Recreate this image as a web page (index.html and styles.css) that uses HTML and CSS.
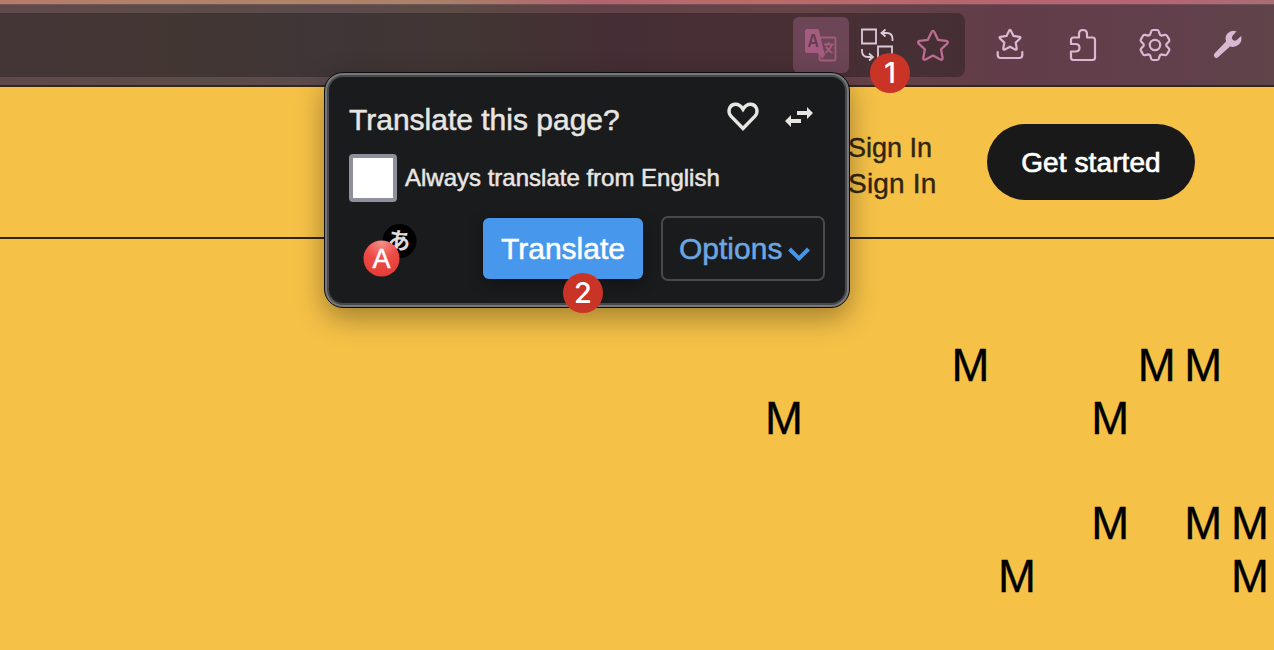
FILE: index.html
```html
<!DOCTYPE html>
<html lang="en">
<head>
<meta charset="utf-8">
<title>Translate this page</title>
<link rel="stylesheet" href="styles.css">
</head>
<body>
<div class="strip"></div>
<div class="toolbar">
  <div class="address">
    <div class="translate-btn">
      <svg width="56" height="56" viewBox="0 0 56 56"><rect x="26.500" y="20.500" width="16" height="23" rx="1.500" fill="none" stroke="#a65c81" stroke-width="1.800"/><path d="M14 12h10.500q1 0 1.300 1l6 25h-4.500l-3-2H14q-2 0-2-2V14q0-2 2-2z" fill="#a65c81"/><path d="M27 36.500h5.500l-3.500 6z" fill="#a65c81"/><path d="M16 30l3.500-12h1.500l3.500 12M17.500 26h6" fill="none" stroke="#673f52" stroke-width="2.200"/><path d="M31 27.500h9.500M35.500 25v2.500M38.500 28q-1.500 5-6.500 8M33 29.500q2.500 4.500 6.500 6.500" fill="none" stroke="#a65c81" stroke-width="1.800"/></svg>
    </div>
    <svg class="swap-icon" width="56" height="56" viewBox="0 0 56 56" fill="none" stroke="#ddcbd7" stroke-width="1.800"><path d="M13 12.500h14v14H13zM29 29.500h14v14H29z"/><path d="M43.500 24v-2q0-6-6-6h-5M36.500 12.500l-4 3.500 4 3.500M13 32v2q0 6 6 6h5M20 36.500l4 3.500-4 3.500"/></svg>
    <svg class="star-icon" width="56" height="56" viewBox="0 0 56 56"><path d="M26.500 15.200q1.500-2.600 3 0l3.500 7.600 8.300 1.100q2.600.6.900 2.800l-6.200 5.700 1.600 8.300q.2 2.800-2.300 1.800L28 38.500l-7.400 4q-2.500 1-2.300-1.800l1.600-8.300-6.200-5.700q-1.700-2.200.9-2.800l8.300-1.100z" fill="none" stroke="#bd6d91" stroke-width="2.300" stroke-linejoin="round"/></svg>
  </div>
  <div class="actions">
    <svg width="32" height="34" viewBox="-16 -17 32 34" fill="none" stroke="#d9b9d2" stroke-width="2.200" stroke-linejoin="round" stroke-linecap="round"><path d="M-.8-14.400q.8-1.400 1.600 0l2.700 5.300 6 .9q1.600.4.500 1.700l-4.300 4.100 1 5.800q0 1.700-1.500 1L0 1.700l-5.200 2.700q-1.500.7-1.500-1l1-5.800-4.300-4.100q-1.100-1.300.5-1.700l6-.9zM-12.300 7v3q0 3 3 3H9.300q3 0 3-3V7"/></svg>
    <svg width="32" height="34" viewBox="-16 -17 32 34" fill="none" stroke="#d9b9d2" stroke-width="2.200" stroke-linejoin="round"><path d="M-12-4v-1q0-2.500 2.500-2.500H-4V-11q0-4 4-4t4 4v3.500h5.500Q12-7.500 12-5v17.500q0 2.500-2.500 2.500h-19q-2.500 0-2.500-2.500V6.500h4.500q4 0 4-3.700t-4-3.800H-12z"/></svg>
    <svg width="32" height="34" viewBox="-16 -17 32 34" fill="none" stroke="#d9b9d2" stroke-width="2.200" stroke-linejoin="round"><path d="M-5-10.200L-3.800-13.700Q-3.400-15-2-15H2Q3.400-15 3.800-13.700L5-10.200 6.330-9.430 10-10.200Q11.400-10.400 12-9.300L14.100-5.600Q14.800-4.400 13.900-3.500L11.330-.77V.77L13.900 3.500Q14.800 4.400 14.100 5.600L12 9.300Q11.400 10.400 10 10.200L6.330 9.430 5 10.200 3.800 13.700Q3.400 15 2 15H-2Q-3.400 15-3.800 13.700L-5 10.200-6.330 9.430-10 10.200Q-11.400 10.400-12 9.300L-14.100 5.600Q-14.800 4.400-13.900 3.500L-11.330.77V-.77L-13.900-3.500Q-14.800-4.400-14.100-5.600L-12-9.300Q-11.400-10.400-10-10.200L-6.330-9.430z"/><circle r="5.200"/></svg>
    <svg width="32" height="34" viewBox="-16 -17 32 34"><path d="M8.500-13.800Q3-15.500-.5-11.500-3.500-8-2-3.500L-13.500 8.500Q-15 10.200-13.500 12t3.500.2L2 1.500Q7 3 10.800-.5 14.500-4 13.200-9L8.500-4.800Q6.500-3.700 4.800-5.200 3-7 4.400-9z" fill="#d9b9d2"/></svg>
  </div>
</div>
<header class="header">
  <div class="signin"><span class="signin-a">Sign In</span><span class="signin-b">Sign In</span></div>
  <div class="cta">Get started</div>
</header>
<main class="letters">
  <span class="r1 c5">M</span><span class="r1 c9">M</span><span class="r1 c10">M</span>
  <span class="r2 c1">M</span><span class="r2 c8">M</span>
  <span class="r4 c8">M</span><span class="r4 c10">M</span><span class="r4 c11">M</span>
  <span class="r5 c6">M</span><span class="r5 c11">M</span>
</main>
<section class="popup">
  <div class="popup-inner">
    <div class="title-row">
      <h1 class="title">Translate this page?</h1>
      <svg class="heart" width="32" height="30" viewBox="0 0 32 30"><path d="M16 26.500L4 14.200Q1.300 11 2.200 7.300 3.500 2.800 8 2.300q4.800-.3 8 5 3.200-5.300 8-5 4.500.5 5.800 5Q30.700 11 28 14.200z" fill="none" stroke="#e8e6e3" stroke-width="3.400"/></svg>
      <svg class="arrows" width="28" height="20" viewBox="0 0 28 20"><path d="M12 4h10V0l6 6-6 6V8H12zM16 12H6V8l-6 6 6 6v-4h10z" fill="#e8e6e3"/></svg>
    </div>
    <div class="check-row"><span class="checkbox"></span><span>Always translate from English</span></div>
    <div class="button-row">
      <svg class="logo" width="56" height="56" viewBox="0 0 56 56"><defs><radialGradient id="red" cx=".5" cy=".05" r=".95"><stop offset="0" stop-color="#f58f8c"/><stop offset=".5" stop-color="#ed4a46"/><stop offset="1" stop-color="#e43c35"/></radialGradient></defs><circle cx="36.500" cy="19" r="17" fill="#000"/><text class="kana" x="36" y="27" text-anchor="middle" transform="rotate(8 36 19)">あ</text><circle cx="18.500" cy="36.500" r="18" fill="url(#red)"/><text class="latin" x="18.500" y="45.500" text-anchor="middle">A</text></svg>
      <div class="primary">Translate</div>
      <div class="options"><span>Options</span><svg width="22" height="15" viewBox="0 0 22 15"><path d="M1.500 2L11 11.500 20.500 2" fill="none" stroke="#4595e8" stroke-width="4"/></svg></div>
    </div>
  </div>
</section>
<div class="badge badge-one">1</div>
<div class="badge badge-two">2</div>
</body>
</html>
```
FILE: styles.css
```css
* { box-sizing: border-box; }
body {
  margin: 0;
  width: 1274px;
  height: 650px;
  position: relative;
  overflow: hidden;
  background: #f5c147;
  font-family: "Liberation Sans", Arial, sans-serif;
}
svg { display: block; flex: none; overflow: visible; }
.strip {
  height: 4px;
  background: linear-gradient(90deg, #b77a6c 0, #b38069 110px, #af8569 300px, #a9806a 440px, #b26570 590px, #ba6b69 740px, #b7656e 980px, #b66576 1150px, #aa6d74 1274px);
}
.toolbar {
  height: 83px;
  display: flex;
  border-top: 1px solid rgba(255, 180, 180, .12);
  border-bottom: 2px solid #382716;
  padding-top: 8px;
  background: linear-gradient(90deg, #60494a 0, #5c4c47 200px, #5b4a4c 330px, #5b4c45 440px, #624148 600px, #664447 800px, #623d49 1000px, #613f4b 1160px, #5f444a 1274px);
}
.address {
  width: 965px;
  height: 64px;
  padding-top: 4px;
  display: flex;
  justify-content: flex-end;
  padding-right: 4px;
  border-radius: 0 8px 8px 0;
  background: linear-gradient(90deg, #443536 0, #423633 180px, #403537 330px, #413633 450px, #452e35 620px, #482f34 800px, #452f35 965px);
}
.translate-btn {
  width: 56px;
  height: 56px;
  border-radius: 6px;
  background: #6c4556;
}
.actions {
  display: flex;
  gap: 40.400px;
  padding: 15px 0 0 29.400px;
}
.header {
  height: 152px;
  border-bottom: 2px solid #30260f;
  display: flex;
  justify-content: flex-end;
  padding: 37px 79px 0 0;
}
.signin {
  width: 139px;
  display: flex;
  flex-direction: column;
  padding-top: 6px;
  color: #30260f;
  line-height: 36px;
  -webkit-text-stroke: .4px #30260f;
}
.signin-a { font-size: 27px; }
.signin-b { font-size: 28px; letter-spacing: .2px; }
.cta {
  width: 208px;
  height: 76px;
  border-radius: 38px;
  background: #191919;
  color: #fff;
  font-size: 28px;
  line-height: 77px;
  text-align: center;
  letter-spacing: .1px;
  -webkit-text-stroke: .7px #fff;
}
.letters {
  display: grid;
  grid-template-columns: repeat(11, 46.6px);
  grid-template-rows: repeat(5, 52.8px);
  padding: 100px 0 0 765px;
  font-size: 45.500px;
  line-height: 53px;
  color: #000;
  -webkit-text-stroke: .3px #000;
}
.r1 { grid-row: 1; }
.r2 { grid-row: 2; }
.r4 { grid-row: 4; }
.r5 { grid-row: 5; }
.c1 { grid-column: 1; }
.c5 { grid-column: 5; }
.c6 { grid-column: 6; }
.c8 { grid-column: 8; }
.c9 { grid-column: 9; }
.c10 { grid-column: 10; }
.c11 { grid-column: 11; }
.popup {
  position: absolute;
  left: 324px;
  top: 72px;
  width: 526px;
  height: 236px;
  border: 1px solid #0c0c0d;
  border-radius: 19px;
  background: #78777a;
  padding: 2px;
  box-shadow: 0 10px 28px rgba(0, 0, 0, .34);
}
.popup-inner {
  height: 100%;
  border: 2px solid #48494c;
  border-radius: 16px;
  background: #1a1b1c;
  color: #e8e6e3;
  padding: 21px 20px 0;
}
.title-row { display: flex; height: 56px; }
.title {
  width: 378px;
  margin: 0;
  padding-top: 4px;
  font-weight: 400;
  font-size: 30px;
  line-height: 36px;
  -webkit-text-stroke: .5px #e8e6e3;
}
.heart { margin-top: 4px; }
.arrows { margin: 9px 0 0 26px; }
.check-row {
  display: flex;
  align-items: center;
  gap: 8px;
  height: 48px;
  font-size: 24px;
  -webkit-text-stroke: .5px #e8e6e3;
}
.checkbox {
  width: 48px;
  height: 48px;
  border: 4px solid #8f8f9d;
  border-radius: 4px;
  background: #fff;
}
.button-row { display: flex; padding-top: 14px; }
.logo { margin: 6px 0 0 14px; }
.kana { font: 700 23px "Noto Sans CJK JP", sans-serif; fill: #ddd; }
.latin { font: 27px "Liberation Sans", sans-serif; fill: #fff; stroke: #fff; stroke-width: .5px; }
.primary {
  margin: 2px 18px 0 64px;
  width: 160px;
  height: 61px;
  border-radius: 6px;
  background: #4798ed;
  color: #fff;
  font-size: 30px;
  line-height: 61px;
  text-align: center;
  box-shadow: 0 4px 14px rgba(0, 0, 0, .35);
  -webkit-text-stroke: .5px #fff;
}
.options {
  width: 164px;
  height: 65px;
  border: 2px solid #48494b;
  border-radius: 7px;
  display: flex;
  gap: 6px;
  padding-left: 16px;
  color: #6ba7e2;
  font-size: 30px;
  line-height: 61px;
  -webkit-text-stroke: .5px #6ba7e2;
}
.options svg { margin-top: 29px; }
.badge {
  position: absolute;
  width: 40px;
  height: 40px;
  border-radius: 50%;
  background: #ca3426;
  color: #fff;
  font: 500 29px/40px Inter, sans-serif;
  text-align: center;
}
.badge-one { left: 870px; top: 53px; }
.badge-two { left: 563px; top: 272.500px; }
```
